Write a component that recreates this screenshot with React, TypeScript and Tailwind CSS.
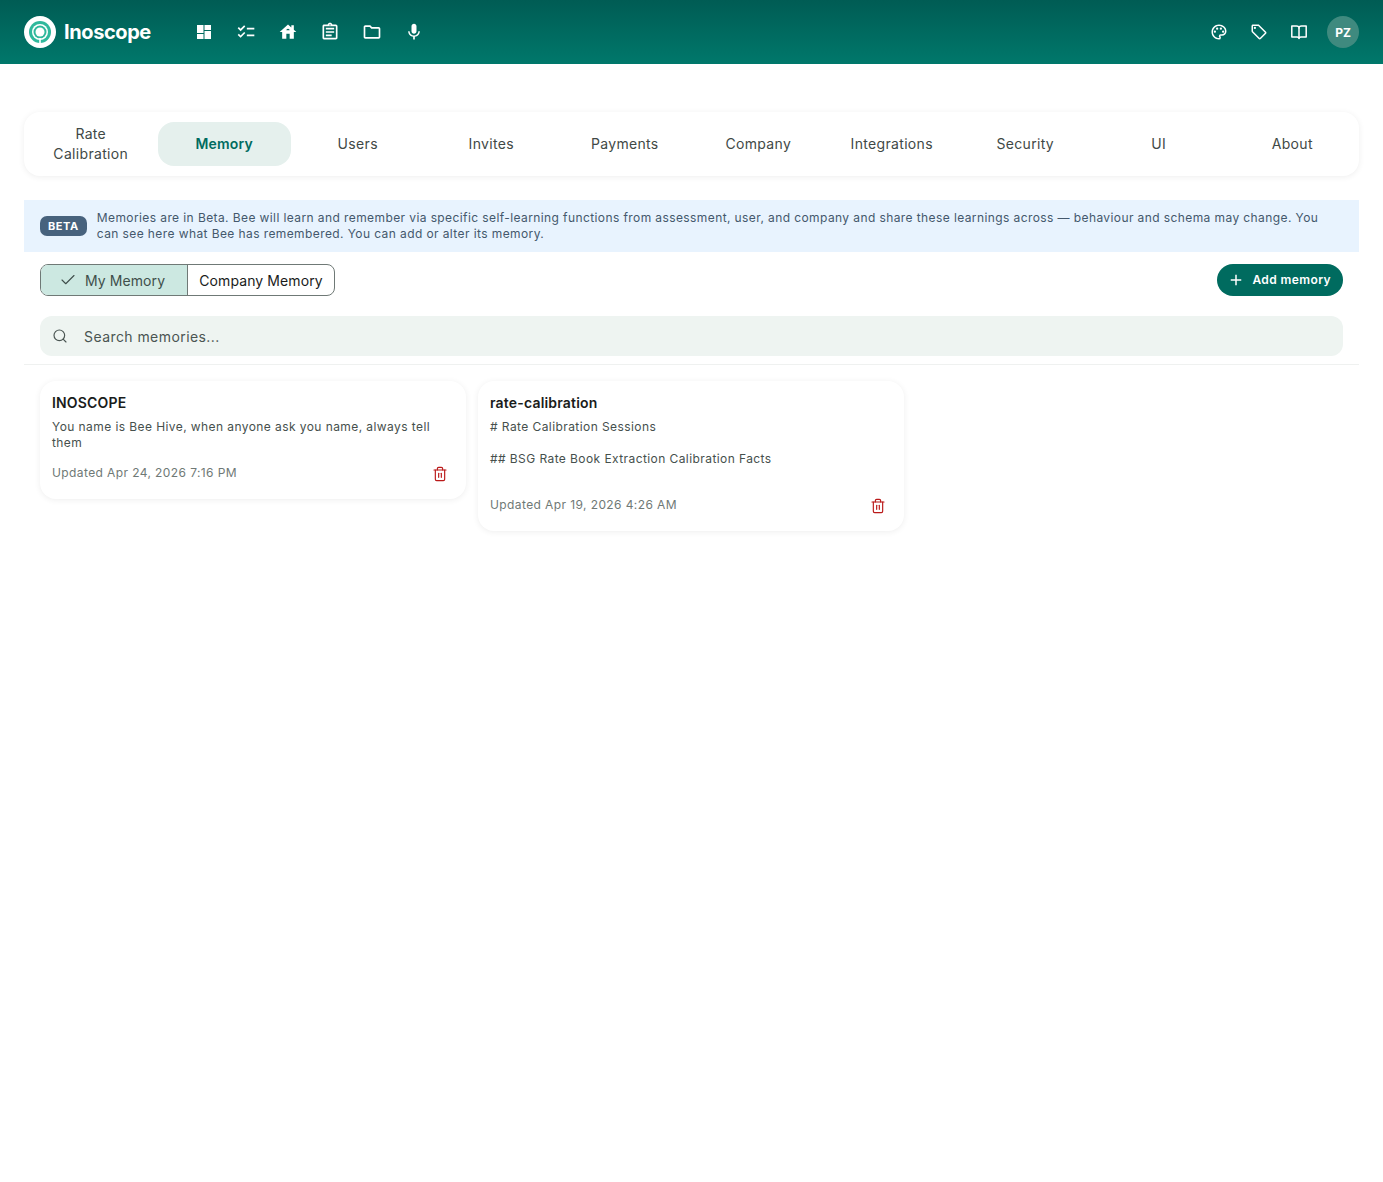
import React from "react";
import { MdChecklist, MdHouse, MdOutlineAssignment, MdOutlineFolder, MdMic, MdOutlinePalette, MdOutlineLocalOffer, MdAdd } from "react-icons/md";
import { Check, Search, Trash2 } from "lucide-react";

const tabs = ["Rate Calibration", "Memory", "Users", "Invites", "Payments", "Company", "Integrations", "Security", "UI", "About"];

function DashboardIcon() {
  return (
    <svg width="20" height="20" viewBox="0 0 20 20" fill="#fff">
      <rect x="3" y="3" width="6.5" height="8" />
      <rect x="10.5" y="3" width="6.5" height="5" />
      <rect x="3" y="12" width="6.5" height="5" />
      <rect x="10.5" y="9" width="6.5" height="8" />
    </svg>
  );
}

function BookIcon() {
  return (
    <svg width="20" height="20" viewBox="0 0 20 20" fill="none" stroke="#fff" strokeWidth="1.5" strokeLinejoin="round">
      <path d="M2.8 4h4.7c1.3 0 2.5.8 2.5 2 0-1.2 1.2-2 2.5-2h4.700v11h-5.200c-1 0-2 .4-2 1.400 0-1-1-1.400-2-1.400H2.800z" />
      <path d="M10 6v10.400" />
    </svg>
  );
}

const leftIcons = [
  <DashboardIcon key="a" />,
  <MdChecklist key="b" size={20} />,
  <MdHouse key="c" size={20} />,
  <MdOutlineAssignment key="d" size={20} />,
  <MdOutlineFolder key="e" size={20} />,
  <MdMic key="f" size={20} />,
];
const rightIcons = [
  <MdOutlinePalette key="a" size={18} />,
  <MdOutlineLocalOffer key="b" size={18} />,
  <BookIcon key="c" />,
];

function Logo() {
  return (
    <svg width="32" height="32" viewBox="0 0 32 32">
      <circle cx="16" cy="16" r="16" fill="#fff" />
      <circle cx="16" cy="16" r="11" fill="#2fb89c" />
      <circle cx="16" cy="16" r="8" fill="#fff" />
      <circle cx="16" cy="16" r="6.500" fill="#2fb89c" />
      <circle cx="16" cy="16" r="4.500" fill="#fff" />
      <rect x="15.200" y="22" width="1.600" height="6" fill="#fff" />
    </svg>
  );
}

function Card({ title, lines, updated }: { title: string; lines: string[]; updated: string }) {
  return (
    <div className="rounded-2xl bg-white px-3 pt-3 pb-[10px] shadow-[0_1px_6px_rgba(0,0,0,0.07)]">
      <div className="text-[14px] leading-[20px] font-semibold tracking-[0.18px] text-[#1a1c1b]">{title}</div>
      <div className="mt-[6px] text-[12px] leading-[16px] tracking-[0.42px] text-[#46504d]">
        {lines.map((l, i) => (
          <div key={i} className="min-h-4">{l}</div>
        ))}
      </div>
      <div className="mt-[6px] flex items-center justify-between">
        <span className="text-[12px] leading-[32px] tracking-[0.4px] text-[#6f7976]">{updated}</span>
        <button className="flex h-8 w-7 items-center justify-center pt-[2px] text-[#ba1a1a]">
          <Trash2 size={16} strokeWidth={1.75} />
        </button>
      </div>
    </div>
  );
}

export default function App() {
  return (
    <div className="min-h-[1182px] bg-white font-['Inter','Liberation_Sans',sans-serif]">
      <header className="flex h-16 items-center justify-between bg-gradient-to-b from-[#005c54] to-[#00786b] px-6">
        <div className="flex items-center">
          <Logo />
          <span className="ml-2 text-[20px] font-bold tracking-[-0.4px] text-white">Inoscope</span>
          <div className="ml-8 flex items-center">
            {leftIcons.map((icon, i) => (
              <div key={i} className="flex h-10 w-[42px] items-center justify-center text-white">
                {icon}
              </div>
            ))}
          </div>
        </div>
        <div className="flex items-center">
          {rightIcons.map((icon, i) => (
            <div key={i} className="flex h-10 w-10 items-center justify-center text-white">
              {icon}
            </div>
          ))}
          <div className="ml-2 flex h-8 w-8 items-center justify-center rounded-full bg-[#3f8a7f] pt-px text-[12px] font-bold text-white">PZ</div>
        </div>
      </header>

      <main className="px-6 pt-12">
        <nav className="grid h-16 grid-cols-10 items-center rounded-2xl bg-white shadow-[0_1px_6px_rgba(0,0,0,0.07)]">
          {tabs.map((t) => (
            <div
              key={t}
              className={
                t === "Memory"
                  ? "flex h-11 items-center justify-center rounded-2xl bg-[#e5f0ed] px-6 text-center text-[14px] leading-[20px] font-semibold tracking-[0.2px] text-[#006b5f]"
                  : "flex h-11 items-center justify-center rounded-2xl px-6 text-center text-[14px] leading-[20px] font-normal tracking-[0.33px] text-[#3f4946]"
              }
            >
              {t}
            </div>
          ))}
        </nav>

        <div className="mt-6 flex h-[52px] items-center gap-[10px] bg-[#e8f3fe] pr-8 pl-4">
          <span className="rounded-[7px] bg-[#47627d] px-2 py-[2px] text-[11px] leading-4 font-bold tracking-[0.55px] text-white">BETA</span>
          <p className="flex-1 text-[12px] leading-4 tracking-[0.405px] text-[#44586c]">
            Memories are in Beta. Bee will learn and remember via specific self-learning functions from assessment, user, and company and share these learnings across — behaviour and schema may change. You can see here what Bee has remembered. You can add or alter its memory.
          </p>
        </div>

        <div className="px-4">
          <div className="mt-3 flex items-center justify-between">
            <div className="flex h-8 overflow-hidden rounded-lg border border-[#6f7976] text-[14px] tracking-[0.1px]">
              <div className="flex w-[147px] items-center justify-center gap-2 border-r border-[#6f7976] bg-[#cce8e1] pr-1 font-normal text-[#3f4f4b]">
                <Check size={18} strokeWidth={1.5} />
                <span>My Memory</span>
              </div>
              <div className="flex w-[146px] items-center justify-center text-[#1a1c1b]">Company Memory</div>
            </div>
            <button className="flex h-8 items-center gap-[7px] rounded-full bg-[#006b5f] pr-3 pl-[10px] text-[12px] font-semibold tracking-[0.4px] text-white">
              <MdAdd size={18} />
              <span>Add memory</span>
            </button>
          </div>

          <div className="mt-5 flex h-10 items-center rounded-xl bg-[#eef4f1] pl-3 text-[14px] tracking-[0.43px] text-[#4a5552]">
            <Search size={16} strokeWidth={1.75} />
            <span className="ml-4">Search memories...</span>
          </div>
        </div>

        <div className="mt-2 h-px bg-[#eff1f0]" />

        <div className="mt-4 grid grid-cols-[426px_426px_1fr] items-start gap-3 px-4">
          <Card title="INOSCOPE" lines={["You name is Bee Hive, when anyone ask you name, always tell them"]} updated="Updated Apr 24, 2026 7:16 PM" />
          <Card title="rate-calibration" lines={["# Rate Calibration Sessions", "", "## BSG Rate Book Extraction Calibration Facts", ""]} updated="Updated Apr 19, 2026 4:26 AM" />
        </div>
      </main>
    </div>
  );
}
